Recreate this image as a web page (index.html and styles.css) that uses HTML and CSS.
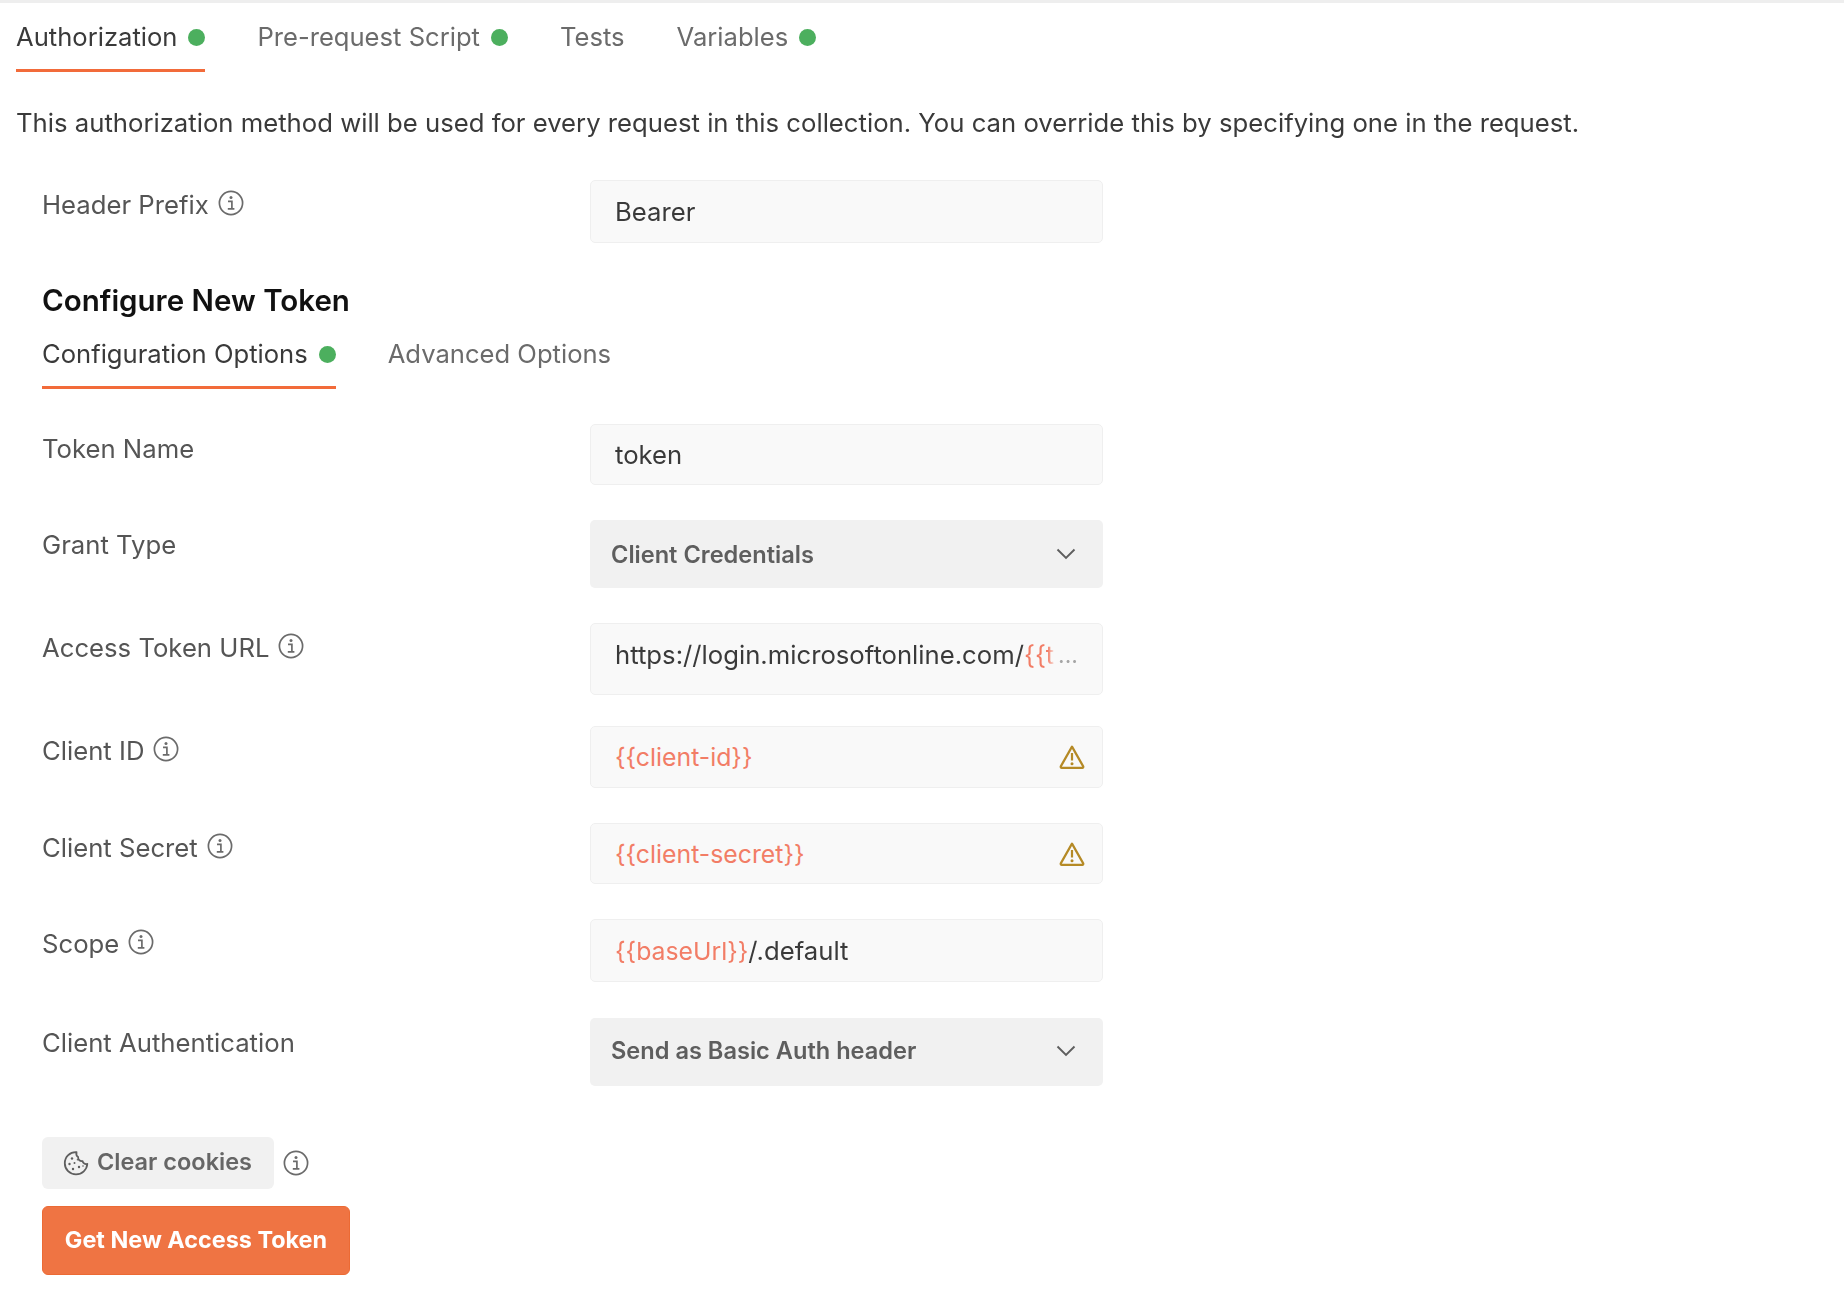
FILE: index.html
```html
<!DOCTYPE html>
<html lang="en">
<head>
<meta charset="utf-8">
<title>Authorization</title>
<link rel="stylesheet" href="styles.css">
</head>
<body>
<svg class="defs" width="0" height="0" aria-hidden="true">
  <symbol id="info" viewBox="0 0 26 26">
    <circle cx="13" cy="13" r="11.6" fill="none" stroke="currentColor" stroke-width="1.7"/>
    <circle cx="13" cy="7.6" r="1.5" fill="currentColor"/>
    <path d="M10 11.3h3.900v7.200M9.800 18.800h6.600" fill="none" stroke="currentColor" stroke-width="1.7"/>
  </symbol>
  <symbol id="warn" viewBox="0 0 26 26">
    <path d="M13 2.600 24.200 22.400a1 1 0 0 1-.9 1.500H2.700a1 1 0 0 1-.9-1.500Z" fill="none" stroke="currentColor" stroke-width="2.2" stroke-linejoin="round"/>
    <path d="M13 9v7.500" stroke="currentColor" stroke-width="2.2"/>
    <circle cx="13" cy="19.8" r="1.5" fill="currentColor"/>
  </symbol>
  <symbol id="chev" viewBox="0 0 20 12">
    <path d="M1.500 1.500 10 10l8.500-8.500" fill="none" stroke="currentColor" stroke-width="1.9"/>
  </symbol>
</svg>

<nav class="tabs main-tabs">
  <a class="tab active">Authorization<i class="dot"></i></a>
  <a class="tab">Pre-request Script<i class="dot"></i></a>
  <a class="tab">Tests</a>
  <a class="tab">Variables<i class="dot"></i></a>
</nav>
<p class="intro">This authorization method will be used for every request in this collection. You can override this by specifying one in the request.</p>

<main class="form">
  <div class="row first">
    <div class="label">Header Prefix<svg class="info"><use href="#info"/></svg></div>
    <div class="field h63">Bearer</div>
  </div>
  <h2 class="title">Configure New Token</h2>
  <nav class="tabs sub-tabs">
    <a class="tab active">Configuration Options<i class="dot"></i></a>
    <a class="tab">Advanced Options</a>
  </nav>
  <div class="row">
    <div class="label">Token Name</div>
    <div class="field h61">token</div>
  </div>
  <div class="row">
    <div class="label">Grant Type</div>
    <div class="select">Client Credentials<svg class="chev"><use href="#chev"/></svg></div>
  </div>
  <div class="row tight">
    <div class="label">Access Token URL<svg class="info"><use href="#info"/></svg></div>
    <div class="field h72">https://login.microsoftonline.com/<span class="var fade">{{t</span><span class="more">...</span></div>
  </div>
  <div class="row">
    <div class="label">Client ID<svg class="info"><use href="#info"/></svg></div>
    <div class="field h62"><span class="var">{{client-id}}</span><svg class="warn"><use href="#warn"/></svg></div>
  </div>
  <div class="row">
    <div class="label">Client Secret<svg class="info"><use href="#info"/></svg></div>
    <div class="field h61"><span class="var">{{client-secret}}</span><svg class="warn"><use href="#warn"/></svg></div>
  </div>
  <div class="row wide">
    <div class="label">Scope<svg class="info"><use href="#info"/></svg></div>
    <div class="field h63"><span class="var">{{baseUrl}}</span>/.default</div>
  </div>
  <div class="row last">
    <div class="label">Client Authentication</div>
    <div class="select raised">Send as Basic Auth header<svg class="chev"><use href="#chev"/></svg></div>
  </div>
  <div class="cookies">
    <button class="btn-cookie">
      <svg class="cookie" viewBox="0 0 26 26" aria-hidden="true">
        <path d="M13.500 2.200C7 1.800 1.800 7 1.800 13.200 1.800 19.500 6.800 24.400 13 24.400c6 0 11-4.700 11.300-10.600-2.200.8-4.400-.5-4.700-2.700-2.600.4-4.700-1.400-4.500-4-1.500-.9-2.100-2.600-1.600-4.900Z" fill="none" stroke="currentColor" stroke-width="1.800" stroke-linejoin="round"/>
        <g fill="currentColor"><circle cx="9" cy="8.500" r="1.200"/><circle cx="6.500" cy="14" r="1.200"/><circle cx="11.500" cy="13" r="1"/><circle cx="10" cy="19" r="1.200"/><circle cx="16" cy="17" r="1.200"/><circle cx="14.500" cy="9.800" r=".8"/><circle cx="20" cy="16" r=".8"/></g>
      </svg>
      <span class="btn-label">Clear cookies</span>
    </button>
    <svg class="info"><use href="#info"/></svg>
  </div>
  <button class="btn-primary">Get New Access Token</button>
</main>
</body>
</html>
```
FILE: styles.css
```css
* { box-sizing: border-box; }
html, body { margin: 0; padding: 0; }
body {
  width: 1844px;
  height: 1306px;
  overflow: hidden;
  background: #fff;
  border-top: 3px solid #eeeeee;
  font-family: Inter, "Noto Sans", sans-serif;
  font-size: 25.7px;
  color: #3a3a3a;
  filter: blur(0.35px);
}
.defs { position: absolute; }
.tabs { display: flex; gap: 52px; }
.main-tabs { padding-left: 16px; height: 69px; }
.tab {
  display: flex;
  align-items: flex-start;
  color: #6b6b6b;
  font-size: 25.6px;
  line-height: 30px;
  border-bottom: 3px solid transparent;
}
.main-tabs .tab { padding-top: 19px; }
.tab.active { color: #3a3a3a; border-bottom-color: #f26b3a; }
.dot {
  width: 17px;
  height: 17px;
  margin: 7px 0 0 11px;
  border-radius: 50%;
  background: #4caf5e;
}
.intro { margin: 0; padding: 36px 0 0 16px; line-height: 30px; color: #3a3a3a; white-space: nowrap; }
.form { padding: 42px 0 0 42px; }
.row { display: grid; grid-template-columns: 548px 513px; margin-bottom: 35px; }
.row.tight { margin-bottom: 31px; }
.row.wide { margin-bottom: 36px; }
.row.last { margin-bottom: 51px; }
.label { display: flex; align-items: flex-start; padding-top: 10px; line-height: 30px; color: #555; }
.info { width: 26px; height: 26px; margin-left: 9px; color: #6b6b6b; flex: none; }
.field {
  display: flex;
  align-items: center;
  padding: 0 17px 0 24px;
  background: #f9f9f9;
  border: 1.500px solid #efefef;
  border-radius: 5px;
  color: #3a3a3a;
  white-space: nowrap;
}
.h61 { height: 61px; }
.h62 { height: 62px; }
.h63 { height: 63px; }
.h72 { height: 72px; align-items: flex-start; padding: 16px 24px 0 24px; line-height: 30px; }
.var { color: #f27d66; font-size: 24.8px; }
.fade {
  width: 31px;
  overflow: hidden;
  font-size: 25.7px;
  -webkit-mask-image: linear-gradient(to left, transparent, #000 7px);
  mask-image: linear-gradient(to left, transparent, #000 7px);
}
.more { margin-left: auto; color: #a6a6a6; font-size: 23px; }
.warn { width: 26px; height: 26px; margin-left: auto; color: #b58a26; flex: none; }
.select {
  display: flex;
  align-items: center;
  justify-content: space-between;
  height: 68px;
  padding: 0 27px 0 21px;
  background: #f1f1f1;
  border-radius: 5px;
  font-weight: 600;
  font-size: 23.6px;
  color: #5e5e5e;
}
.select.raised { padding-bottom: 3px; }
.chev { width: 20px; height: 12px; color: #5e5e5e; }
.title { margin: 39px 0 21px; font-size: 29.5px; line-height: 36px; font-weight: 600; color: #111; }
.sub-tabs { height: 50px; margin-bottom: 35px; }
.cookies { display: flex; align-items: center; margin-bottom: 17px; }
.btn-cookie {
  display: flex;
  align-items: center;
  gap: 8px;
  width: 232px;
  height: 52px;
  padding: 0 0 0 21px;
  border: 0;
  border-radius: 6px;
  background: #f1f1f1;
  font: 600 23.5px Inter, sans-serif;
  color: #666;
}
.btn-label { padding-bottom: 3px; }
.cookie { width: 26px; height: 26px; color: #5e5e5e; flex: none; }
.btn-primary {
  display: block;
  width: 308px;
  height: 69px;
  padding: 0 0 3px;
  border: 1px solid #ec6a34;
  border-radius: 6px;
  background: #ef7443;
  font: 700 23.4px Inter, sans-serif;
  color: #fff;
}
```
